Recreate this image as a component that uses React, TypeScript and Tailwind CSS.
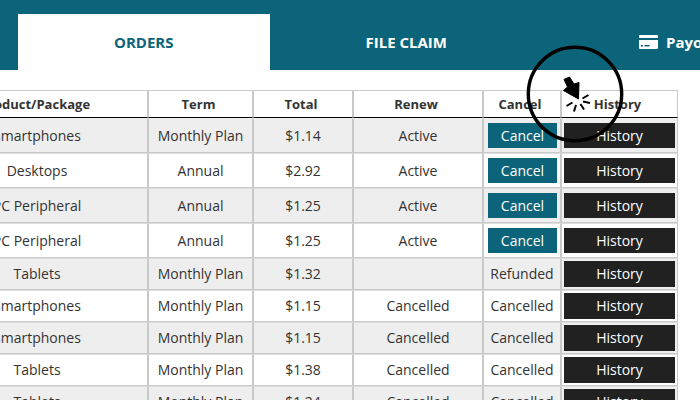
import { useState } from "react";

interface Order {
    product: string;
    term: string;
    total: string;
    renew: string;
    status: string;
}

const orders: Order[] = [
    { product: "Smartphones", term: "Monthly Plan", total: "$1.14", renew: "Active", status: "Active" },
    { product: "Desktops", term: "Annual", total: "$2.92", renew: "Active", status: "Active" },
    { product: "PC Peripheral", term: "Annual", total: "$1.25", renew: "Active", status: "Active" },
    { product: "PC Peripheral", term: "Annual", total: "$1.25", renew: "Active", status: "Active" },
    { product: "Tablets", term: "Monthly Plan", total: "$1.32", renew: "", status: "Refunded" },
    { product: "Smartphones", term: "Monthly Plan", total: "$1.15", renew: "Cancelled", status: "Cancelled" },
    { product: "Smartphones", term: "Monthly Plan", total: "$1.15", renew: "Cancelled", status: "Cancelled" },
    { product: "Tablets", term: "Monthly Plan", total: "$1.38", renew: "Cancelled", status: "Cancelled" },
    { product: "Tablets", term: "Monthly Plan", total: "$1.24", renew: "Cancelled", status: "Cancelled" },
];

const columns = ["Product/Package", "Term", "Total", "Renew", "Cancel", "History"];

const tabs = [
    { id: "orders", label: "ORDERS" },
    { id: "claim", label: "FILE CLAIM" },
    { id: "payouts", label: "Payouts" },
];

function CardIcon() {
    return (
        <svg width="19" height="14" viewBox="0 0 19 14" fill="currentColor" aria-hidden="true">
            <path d="M1 0h17a1 1 0 0 1 1 1v2H0V1a1 1 0 0 1 1-1z" />
            <path
                fillRule="evenodd"
                d="M0 5h19v8a1 1 0 0 1-1 1H1a1 1 0 0 1-1-1zM2 10v1.500h2V10zM5.500 10v1.500h5V10z"
            />
        </svg>
    );
}

function ClickMarker() {
    return (
        <svg
            className="pointer-events-none absolute top-[45px] right-[76px]"
            width="98"
            height="98"
            viewBox="0 0 98 98"
            fill="none"
            stroke="#000"
            aria-hidden="true"
        >
            <circle cx="49" cy="49" r="46.700" strokeWidth="3.400" />
            <path
                d="M38 34.500l5.500-2.500 4.500 7 5-1.500-.5 16.500-15-8.500 4-3.500z"
                fill="#000"
                strokeWidth="1"
                strokeLinejoin="round"
            />
            <path
                d="M56.500 53.500l6-3.500M57 56.500l7 1.500M54.500 59l3.500 5.500M50 60l-2 6.500M46.500 57.500l-6 3.500"
                strokeWidth="2"
            />
        </svg>
    );
}

function Header() {
    const [activeTab, setActiveTab] = useState("orders");

    return (
        <header className="bg-[#0b6479] pt-3.5 pl-[18px]">
            <nav className="flex h-14 text-[15px] font-bold">
                {tabs.map((tab) => (
                    <button
                        key={tab.id}
                        className={`flex shrink-0 cursor-pointer items-center gap-2 px-24 ${
                            activeTab === tab.id ? "bg-white text-[#0b6479]" : "text-white"
                        }`}
                        onClick={() => setActiveTab(tab.id)}
                    >
                        {tab.id === "payouts" && <CardIcon />}
                        {tab.label}
                    </button>
                ))}
            </nav>
        </header>
    );
}

function OrderRow({ order }: { order: Order }) {
    const isActive = order.status === "Active";
    const rowHeight = isActive ? "h-[35px]" : "h-8";
    const buttonHeight = isActive ? "h-[25px]" : "h-[26px]";
    const cell = "border border-[#c9c9c9] border-t-[#dedede] p-0";

    return (
        <tr className={`${rowHeight} odd:bg-[#eeeeee] first:[&>td]:border-t-[#eeeeee]`}>
            <td className={cell}>{order.product}</td>
            <td className={cell}>{order.term}</td>
            <td className={cell}>{order.total}</td>
            <td className={cell}>{order.renew}</td>
            <td className={`${cell} px-1`}>
                {isActive ? (
                    <button className={`block w-[69px] cursor-pointer bg-[#0b6479] text-white ${buttonHeight}`}>
                        Cancel
                    </button>
                ) : (
                    order.status
                )}
            </td>
            <td className={`${cell} px-0.5`}>
                <button className={`block w-full cursor-pointer bg-[#212121] text-white ${buttonHeight}`}>
                    History
                </button>
            </td>
        </tr>
    );
}

export default function App() {
    return (
        <div className="relative h-screen overflow-hidden bg-white font-['Open_Sans','Noto_Sans',sans-serif] text-[#333333]">
            <Header />
            <main className="flex justify-end pt-5 pr-[22px]">
                <table className="w-[752px] shrink-0 table-fixed border-separate border-spacing-0 text-center text-sm">
                    <colgroup>
                        <col className="w-[222px]" />
                        <col className="w-[105px]" />
                        <col className="w-[100px]" />
                        <col className="w-[130px]" />
                        <col className="w-[78px]" />
                        <col className="w-[117px]" />
                    </colgroup>
                    <thead className="text-[13px]">
                        <tr className="h-7">
                            {columns.map((column) => (
                                <th key={column} className="border border-[#c9c9c9] border-b-black py-0 pr-1 pl-0 font-bold">
                                    {column}
                                </th>
                            ))}
                        </tr>
                    </thead>
                    <tbody>
                        {orders.map((order, index) => (
                            <OrderRow key={index} order={order} />
                        ))}
                    </tbody>
                </table>
            </main>
            <ClickMarker />
        </div>
    );
}
